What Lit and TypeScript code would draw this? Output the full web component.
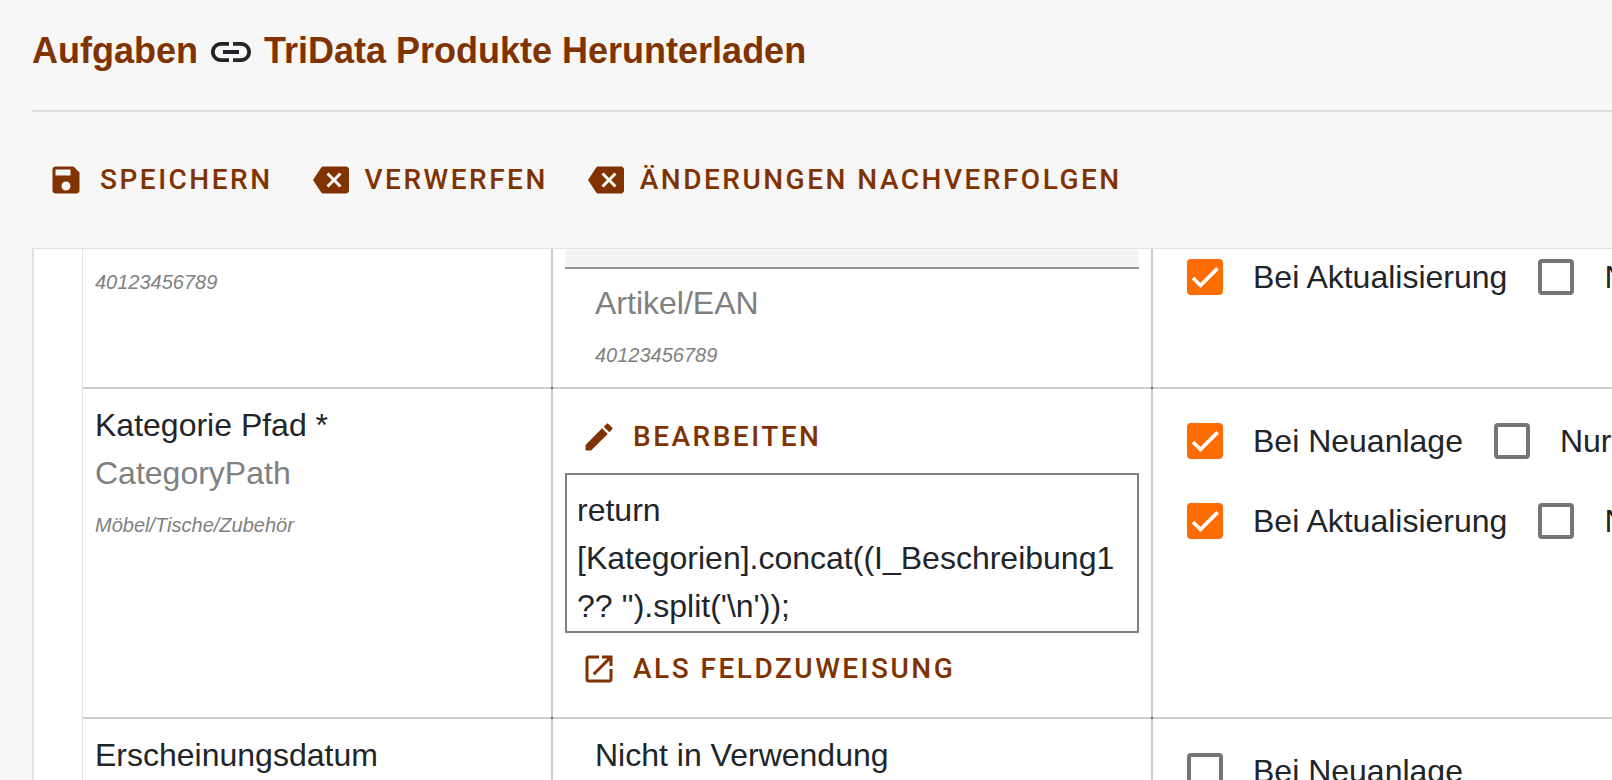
import { LitElement, html, svg, css, nothing } from "lit";
import { customElement, property } from "lit/decorators.js";

const ICONS: Record<string, string> = {
  link: "M3.9 12c0-1.71 1.39-3.1 3.1-3.1h4V7H7c-2.76 0-5 2.24-5 5s2.24 5 5 5h4v-1.9H7c-1.71 0-3.1-1.39-3.1-3.1zM8 13h8v-2H8v2zm9-6h-4v1.9h4c1.71 0 3.1 1.39 3.1 3.1s-1.39 3.1-3.1 3.1h-4V17h4c2.76 0 5-2.24 5-5s-2.24-5-5-5z",
  save: "M17 3H5c-1.11 0-2 .9-2 2v14c0 1.1.89 2 2 2h14c1.1 0 2-.9 2-2V7l-4-4zm-5 16c-1.66 0-3-1.34-3-3s1.34-3 3-3 3 1.34 3 3-1.34 3-3 3zm3-10H5V5h10v4z",
  backspace:
    "M22 3H7c-.69 0-1.23.35-1.59.88L0 12l5.41 8.11c.36.53.9.89 1.59.89h15c1.1 0 2-.9 2-2V5c0-1.1-.9-2-2-2zm-3 12.59L17.59 17 14 13.41 10.41 17 9 15.59 12.59 12 9 8.41 10.41 7 14 10.59 17.59 7 19 8.41 15.41 12 19 15.59z",
  edit: "M3 17.25V21h3.75L17.81 9.94l-3.75-3.75L3 17.25zM20.71 7.04c.39-.39.39-1.02 0-1.41l-2.34-2.34c-.39-.39-1.02-.39-1.41 0l-1.83 1.83 3.75 3.75 1.83-1.83z",
  open: "M19 19H5V5h7V3H5c-1.11 0-2 .9-2 2v14c0 1.1.89 2 2 2h14c1.1 0 2-.9 2-2v-7h-2v7zM14 3v2h3.59l-9.83 9.83 1.41 1.41L19 6.41V10h2V3h-7z",
};

const icon = (name: string) => html`
  <svg class="icon" viewBox="0 0 24 24" aria-hidden="true">${svg`<path d=${ICONS[name]}></path>`}</svg>
`;

@customElement("text-button")
class TextButton extends LitElement {
  @property() icon = "";
  @property() label = "";

  static styles = css`
    :host {
      display: block;
    }
    .button {
      display: flex;
      align-items: center;
      gap: 16px;
      height: 72px;
      padding: 0 16px;
      border: 0;
      background: none;
      color: #803300;
      font: 500 28px/36px Roboto, sans-serif;
      letter-spacing: 2.5px;
      text-transform: uppercase;
      white-space: nowrap;
      cursor: pointer;
    }
    .icon {
      width: 36px;
      height: 36px;
      fill: currentColor;
      flex: none;
    }
  `;

  render() {
    return html`<button class="button" type="button">${icon(this.icon)}<span>${this.label}</span></button>`;
  }
}

@customElement("check-option")
class CheckOption extends LitElement {
  @property() label = "";
  @property({ type: Boolean }) checked = false;

  static styles = css`
    :host {
      display: flex;
      align-items: center;
      gap: 8px;
      flex: none;
    }
    .target {
      display: grid;
      place-items: center;
      width: 80px;
      height: 80px;
    }
    .box,
    .mark {
      grid-area: 1 / 1;
    }
    .box {
      appearance: none;
      box-sizing: border-box;
      width: 36px;
      height: 36px;
      margin: 0;
      border: 4px solid #757575;
      border-radius: 4px;
      background: #fff;
    }
    .box:checked {
      border-color: #ff6d00;
      background: #ff6d00;
    }
    .mark {
      width: 28px;
      height: 28px;
      fill: none;
      stroke: #fff;
      stroke-width: 3.12;
      pointer-events: none;
      visibility: hidden;
    }
    .box:checked + .mark {
      visibility: visible;
    }
    .label {
      white-space: nowrap;
    }
  `;

  render() {
    return html`
      <span class="target">
        <input class="box" id="box" type="checkbox" .checked=${this.checked} />
        <svg class="mark" viewBox="0 0 24 24" aria-hidden="true">
          <path d="M1.73 12.91 8.1 19.28 22.79 4.59"></path>
        </svg>
      </span>
      <label class="label" for="box">${this.label}</label>
    `;
  }
}

interface Option {
  label: string;
  checked?: boolean;
}

const CODE = "return [Kategorien].concat((I_Beschreibung1 ?? '').split('\\n'));";

@customElement("app-root")
class AppRoot extends LitElement {
  static styles = css`
    :host {
      display: flex;
      flex-direction: column;
      box-sizing: border-box;
      height: 100vh;
      padding-left: 32px;
      overflow: hidden;
      background: #f7f7f7;
      color: #212529;
      font: 32px/48px "Liberation Sans", Arial, sans-serif;
    }
    .head {
      display: flex;
      align-items: center;
      gap: 9px;
      box-sizing: border-box;
      height: 112px;
      padding-bottom: 6px;
      border-bottom: 2px solid #dedede;
      flex: none;
    }
    .title {
      margin: 0;
      padding-bottom: 2px;
      font-size: 36px;
      line-height: 48px;
      font-weight: 700;
      white-space: nowrap;
    }
    .link {
      color: #803300;
      text-decoration: none;
    }
    .head .icon {
      width: 48px;
      height: 48px;
      fill: currentColor;
    }
    .toolbar {
      display: flex;
      gap: 8px;
      padding: 32px 0;
      flex: none;
    }
    .panel {
      flex: 1;
      min-height: 0;
      overflow: hidden;
      padding-left: 48px;
      border-top: 1px solid #e0e0e0;
      border-left: 2px solid #e3e3e3;
      background: #fff;
    }
    .table {
      width: 100%;
      table-layout: fixed;
      border-collapse: separate;
      border-spacing: 0;
      border-left: 1px solid #e3e3e3;
    }
    .source {
      width: 468px;
    }
    .target {
      width: 600px;
    }
    .cell {
      position: relative;
      padding: 12px;
      vertical-align: top;
      text-align: left;
      font-weight: 400;
      border-bottom: 2px solid #ccc;
    }
    .cell + .cell {
      border-left: 2px solid #ccc;
    }
    /* darker joint where the row and column rules cross */
    .cell + .cell::after {
      content: "";
      position: absolute;
      left: -2px;
      bottom: -2px;
      width: 2px;
      height: 2px;
      background: #666;
    }
    .row:first-child .cell {
      padding-top: 0;
    }
    .line {
      margin: 0;
    }
    .muted {
      color: #808080;
    }
    .example {
      font-size: 20px;
      line-height: 24px;
      font-style: italic;
    }
    .inset {
      padding-left: 30px;
    }
    .row:first-child .source-text {
      padding-top: 5px;
    }
    .field {
      display: block;
      box-sizing: border-box;
      width: 100%;
      height: 20px;
      margin-bottom: 10px;
      border: 0;
      border-top: 1px solid #fff;
      border-bottom: 2px solid #949494;
      border-radius: 0;
      background: #f4f4f4;
      padding: 0;
    }
    .code {
      display: block;
      box-sizing: border-box;
      width: 100%;
      height: 160px;
      margin: 0;
      padding: 11px 10px 0;
      border: 2px solid #808080;
      border-radius: 0;
      background: #fff;
      color: inherit;
      font: inherit;
      resize: none;
      overflow: hidden;
    }
    .options {
      display: flex;
      gap: 9px;
    }
    .row:first-child .options {
      height: 68px;
      align-items: flex-end;
    }
  `;

  private options(list: Option[]) {
    return html`<div class="options">
      ${list.map((o) => html`<check-option label=${o.label} ?checked=${o.checked}></check-option>`)}
    </div>`;
  }

  private names(title: string, key: string, example: string) {
    return html`<div class="source-text">
      ${title ? html`<p class="line">${title}</p>` : nothing}
      ${key ? html`<p class="line muted">${key}</p>` : nothing}
      ${example ? html`<p class="line muted"><span class="example">${example}</span></p>` : nothing}
    </div>`;
  }

  render() {
    const update = [{ label: "Bei Aktualisierung", checked: true }, { label: "Nur" }];
    const create = [{ label: "Bei Neuanlage", checked: true }, { label: "Nur" }];
    return html`
      <header class="head">
        <h1 class="title"><a class="link" href="#aufgaben">Aufgaben</a></h1>
        ${icon("link")}
        <h1 class="title"><a class="link" href="#tridata">TriData Produkte Herunterladen</a></h1>
      </header>
      <nav class="toolbar">
        <text-button icon="save" label="Speichern"></text-button>
        <text-button icon="backspace" label="Verwerfen"></text-button>
        <text-button icon="backspace" label="Änderungen nachverfolgen"></text-button>
      </nav>
      <main class="panel">
        <table class="table">
          <colgroup>
            <col class="source" />
            <col class="target" />
            <col />
          </colgroup>
          <tbody>
            <tr class="row">
              <th class="cell" scope="row">${this.names("", "", "40123456789")}</th>
              <td class="cell">
                <input class="field" type="text" aria-labelledby="ean" />
                <div class="inset">
                  <p class="line muted" id="ean">Artikel/EAN</p>
                  <p class="line muted"><span class="example">40123456789</span></p>
                </div>
              </td>
              <td class="cell">${this.options(update)}</td>
            </tr>
            <tr class="row">
              <th class="cell" scope="row" id="category">
                ${this.names("Kategorie Pfad *", "CategoryPath", "Möbel/Tische/Zubehör")}
              </th>
              <td class="cell">
                <text-button icon="edit" label="Bearbeiten"></text-button>
                <textarea class="code" aria-labelledby="category" spellcheck="false" .value=${CODE}></textarea>
                <text-button icon="open" label="Als Feldzuweisung"></text-button>
              </td>
              <td class="cell">${this.options(create)} ${this.options(update)}</td>
            </tr>
            <tr class="row">
              <th class="cell" scope="row">${this.names("Erscheinungsdatum", "", "")}</th>
              <td class="cell"><p class="line inset">Nicht in Verwendung</p></td>
              <td class="cell">${this.options([{ label: "Bei Neuanlage" }])}</td>
            </tr>
          </tbody>
        </table>
      </main>
    `;
  }
}
